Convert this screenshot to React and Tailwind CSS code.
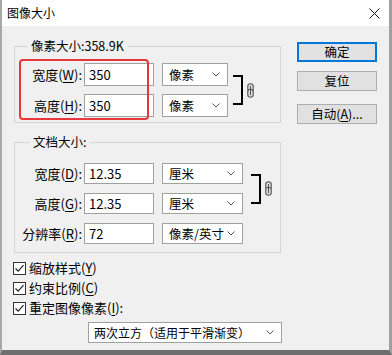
import React from "react";

function Chevron() {
  return (
    <svg width="8" height="5" viewBox="0 0 8 5" className="shrink-0">
      <polyline points="0.5,0.5 4,4 7.5,0.5" fill="none" stroke="#5a5a5a" strokeWidth="1" />
    </svg>
  );
}

function Chain() {
  return (
    <svg width="7" height="15" viewBox="0 0 7 15" className="shrink-0">
      <rect x="0.75" y="0.75" width="5.5" height="8" rx="2.75" fill="#dcdcdc" stroke="#555555" strokeWidth="1.1" />
      <rect x="0.75" y="6.25" width="5.5" height="8" rx="2.75" fill="#dcdcdc" stroke="#555555" strokeWidth="1.1" />
      <line x1="3.5" y1="3" x2="3.5" y2="12" stroke="#555555" strokeWidth="1" />
    </svg>
  );
}

function Check() {
  return (
    <div className="w-[13px] h-[13px] border border-[#333333] bg-white flex items-center justify-center shrink-0">
      <svg width="11" height="11" viewBox="0 0 11 11">
        <polyline points="1.5,5.5 4.2,8.2 9.5,2.2" fill="none" stroke="#222222" strokeWidth="1.2" />
      </svg>
    </div>
  );
}

function Row({ pre, k, value, unit, selW, h }) {
  return (
    <div className={"flex items-center " + h}>
      <div className="w-[67px] text-right text-[13px] leading-[16px] text-black whitespace-nowrap">
        {pre}(<u className="underline-offset-2">{k}</u>):
      </div>
      <div className="ml-[2px] w-[70px] h-full bg-white border border-[#a0a0a0] flex items-center pl-[4px] text-[13px] leading-[16px] text-black">
        {value}
      </div>
      <div className={"ml-[8px] h-full bg-white border border-[#a0a0a0] flex items-center justify-between pl-[6px] pr-[7px] text-[12.5px] leading-[16px] text-black " + selW}>
        <span className="whitespace-nowrap">{unit}</span>
        <Chevron />
      </div>
    </div>
  );
}

function Btn({ children, def }) {
  return (
    <div
      className={
        "w-[80px] h-[20px] flex items-center justify-center text-[12.5px] leading-[16px] text-black bg-[#e1e1e1] " +
        (def ? "border-2 border-[#0078d7]" : "border border-[#adadad]")
      }
    >
      {children}
    </div>
  );
}

export default function App() {
  return (
    <div className="w-[392px] h-[355px] bg-[#f0f0f0] border-l-2 border-l-[#a8a8a8] border-r-[3px] border-r-[#a0a0a0] border-b-[5px] border-b-[#6e6e6e] flex flex-col font-['Noto_Sans_CJK_SC','Noto_Sans',sans-serif] overflow-hidden">
      <div className="h-[26px] bg-white flex items-center justify-between pl-[5px] pr-[9px] shrink-0">
        <span className="text-[12px] leading-[16px] text-black">图像大小</span>
        <svg width="11" height="11" viewBox="0 0 11 11">
          <line x1="0.5" y1="0.5" x2="10.5" y2="10.5" stroke="#111" strokeWidth="1" />
          <line x1="10.5" y1="0.5" x2="0.5" y2="10.5" stroke="#111" strokeWidth="1" />
        </svg>
      </div>
      <div className="flex flex-1">
        <div className="ml-[12px] w-[267px] flex flex-col">
          <fieldset className="mt-[12px] border border-[#d5d5d5] pt-[9px] pb-[5px]">
            <legend className="ml-[12px] px-[4px] text-[12.5px] leading-[16px] text-black">像素大小:358.9K</legend>
            <div className="relative flex items-center">
              <div className="flex flex-col gap-[8px]">
                <Row pre="宽度" k="W" value="350" unit="像素" selW="w-[66px]" h="h-[23px]" />
                <Row pre="高度" k="H" value="350" unit="像素" selW="w-[66px]" h="h-[23px]" />
              </div>
              <div className="ml-[5px] w-[10px] h-[30px] border-y-2 border-r-2 border-black" />
              <div className="ml-[4px]">
                <Chain />
              </div>
              <div className="absolute left-[4px] top-[-4px] w-[130px] h-[61px] border-2 border-[#e8373a] rounded-[4px] pointer-events-none" />
            </div>
          </fieldset>
          <fieldset className="mt-[11px] border border-[#d5d5d5] pt-[13px] pb-[8px]">
            <legend className="ml-[14px] px-[4px] text-[12.5px] leading-[16px] text-black">文档大小:</legend>
            <div className="flex items-center">
              <div className="flex flex-col gap-[9px]">
                <Row pre="宽度" k="D" value="12.35" unit="厘米" selW="w-[81px]" h="h-[21px]" />
                <Row pre="高度" k="G" value="12.35" unit="厘米" selW="w-[81px]" h="h-[21px]" />
              </div>
              <div className="ml-[8px] w-[10px] h-[30px] border-y-2 border-r-2 border-black" />
              <div className="ml-[4px]">
                <Chain />
              </div>
            </div>
            <div className="mt-[9px]">
              <Row pre="分辨率" k="R" value="72" unit="像素/英寸" selW="w-[81px]" h="h-[21px]" />
            </div>
          </fieldset>
          <div className="mt-[5px] -ml-[1px] flex flex-col">
            <div className="h-[20px] flex items-center gap-[3px] text-[13px] leading-[16px] text-black">
              <Check />
              <span>缩放样式(<u className="underline-offset-2">Y</u>)</span>
            </div>
            <div className="h-[20px] flex items-center gap-[3px] text-[13px] leading-[16px] text-black">
              <Check />
              <span>约束比例(<u className="underline-offset-2">C</u>)</span>
            </div>
            <div className="h-[20px] flex items-center gap-[3px] text-[13px] leading-[16px] text-black">
              <Check />
              <span>重定图像像素(<u className="underline-offset-2">I</u>):</span>
            </div>
          </div>
          <div className="mt-[4px] ml-[74px] w-[194px] h-[21px] bg-white border border-[#a0a0a0] flex items-center justify-between pl-[5px] pr-[7px] text-[12px] leading-[16px] text-black">
            <span className="whitespace-nowrap">两次立方（适用于平滑渐变）</span>
            <Chevron />
          </div>
        </div>
        <div className="ml-[16px] pt-[16px] flex flex-col">
          <Btn def>确定</Btn>
          <div className="mt-[9px]">
            <Btn>复位</Btn>
          </div>
          <div className="mt-[13px]">
            <Btn>
              自动(<u className="underline-offset-2">A</u>)...
            </Btn>
          </div>
        </div>
      </div>
    </div>
  );
}
